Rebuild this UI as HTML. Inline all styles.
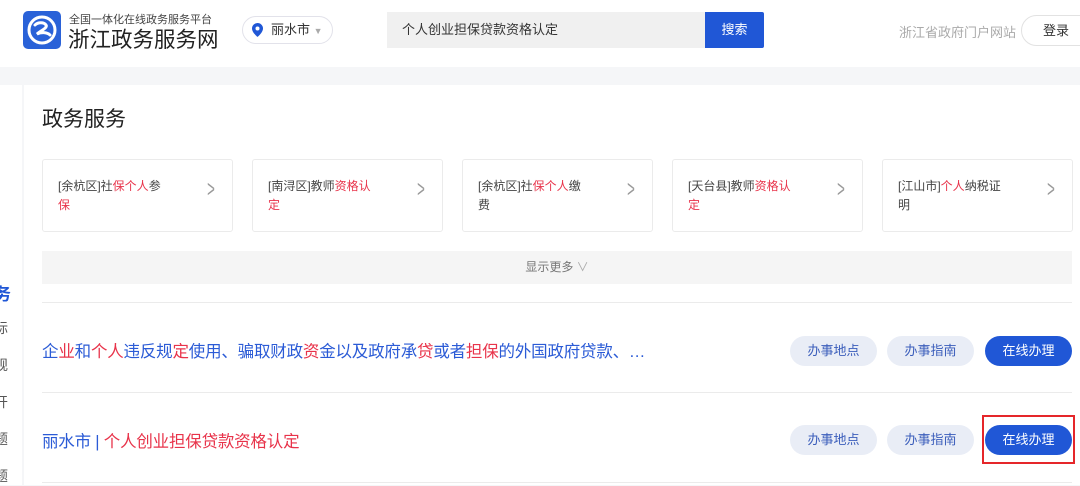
<!DOCTYPE html>
<html><head><meta charset="utf-8"><style>
*{margin:0;padding:0;box-sizing:border-box}
body{width:1080px;height:485px;overflow:hidden;background:#f5f6f8;font-family:"Liberation Sans","Noto Sans CJK SC",sans-serif;position:relative;color:#333}
.a{position:absolute}
.hdr{left:0;top:0;width:1080px;height:67px;background:#fff}
.card{background:#fff;border:1px solid #ebebeb;border-radius:3px;width:191px;height:73px;top:159px;font-size:12px;color:#444;line-height:19px;padding:17px 0 0 15px}
.card i{font-style:normal;color:#e8334a}
.card b{position:absolute;right:14px;top:20px;font-weight:normal;color:#999;font-size:24px;transform:scaleX(.55)}
.r{color:#e8334a}.bl{color:#2b5bd6}
.btn{height:30px;border-radius:15px;font-size:13px;text-align:center;line-height:30px;width:87px}
.g{background:#e9edf6;color:#3a5dbb}
.p{background:#2057d6;color:#fff}
.side{left:-6px;font-size:14px;color:#555}
</style></head><body>
<div class="a hdr"></div>
<svg class="a" style="left:23px;top:11px" width="38" height="38" viewBox="0 0 38 38"><rect width="38" height="38" rx="5" fill="#2a62d8"/><circle cx="19" cy="19" r="13" fill="none" stroke="#fff" stroke-width="3"/><path d="M12 14c3-3 9-3 11 0s-6 6-9 9c4-2 10-2 13 1" fill="none" stroke="#fff" stroke-width="3" stroke-linecap="round"/></svg>
<div class="a" style="left:69px;top:11px;font-size:11px;color:#444">全国一体化在线政务服务平台</div>
<div class="a" style="left:68px;top:23px;font-size:21.5px;color:#222">浙江政务服务网</div>
<div class="a" style="left:242px;top:16px;width:91px;height:28px;border:1px solid #e2e2ea;border-radius:14px;font-size:13px;line-height:26px;padding-left:28px;color:#333">丽水市 <span style="color:#aaa;font-size:9px">▼</span></div>
<svg class="a" style="left:252px;top:23px" width="11" height="14" viewBox="0 0 11 14"><path d="M5.5 0A5.5 5.5 0 0 0 0 5.5C0 9.5 5.5 14 5.5 14S11 9.5 11 5.5A5.5 5.5 0 0 0 5.5 0z" fill="#2057d6"/><circle cx="5.5" cy="5.5" r="2" fill="#fff"/></svg>
<div class="a" style="left:387px;top:12px;width:319px;height:36px;background:#f0f0f0;font-size:13px;line-height:36px;padding-left:15px;color:#333">个人创业担保贷款资格认定</div>
<div class="a" style="left:705px;top:12px;width:59px;height:36px;background:#2057d6;border-radius:0 2px 2px 0;color:#fff;font-size:13px;text-align:center;line-height:36px">搜索</div>
<div class="a" style="left:768px;top:22px;width:248px;text-align:right;font-size:13px;color:#aaa">浙江省政府门户网站</div>
<div class="a" style="left:1021px;top:15px;width:80px;height:31px;border:1px solid #e2e2e2;border-radius:16px;font-size:13px;line-height:29px;padding-left:21px;color:#333">登录</div>
<div class="a" style="left:0;top:85px;width:22px;height:400px;background:#fff"></div>
<div class="a side" style="top:280px;color:#2057d6;font-weight:bold;font-size:17px">务</div>
<div class="a side" style="top:318px">标</div>
<div class="a side" style="top:355px">规</div>
<div class="a side" style="top:392px">开</div>
<div class="a side" style="top:429px">题</div>
<div class="a side" style="top:466px">题</div>
<div class="a" style="left:24px;top:85px;width:1056px;height:400px;background:#fff"></div>
<div class="a" style="left:42px;top:103px;font-size:21px;color:#222">政务服务</div>
<div class="a card" style="left:42px">[余杭区]社<i>保个人</i>参<br><i>保</i><b>&gt;</b></div>
<div class="a card" style="left:252px">[南浔区]教师<i>资格认</i><br><i>定</i><b>&gt;</b></div>
<div class="a card" style="left:462px">[余杭区]社<i>保个人</i>缴<br>费<b>&gt;</b></div>
<div class="a card" style="left:672px">[天台县]教师<i>资格认</i><br><i>定</i><b>&gt;</b></div>
<div class="a card" style="left:882px">[江山市]<i>个人</i>纳税证<br>明<b>&gt;</b></div>
<div class="a" style="left:42px;top:251px;width:1030px;height:33px;background:#f5f5f5;font-size:12px;color:#777;text-align:center;line-height:33px">显示更多 <span style="color:#aaa">∨</span></div>
<div class="a" style="left:42px;top:302px;width:1030px;height:1px;background:#ebebeb"></div>
<div class="a" style="left:42px;top:338px;font-size:16.5px;letter-spacing:-0.2px"><span class="bl">企</span><span class="r">业</span><span class="bl">和</span><span class="r">个人</span><span class="bl">违反规</span><span class="r">定</span><span class="bl">使用、骗取财政</span><span class="r">资</span><span class="bl">金以及政府承</span><span class="r">贷</span><span class="bl">或者</span><span class="r">担保</span><span class="bl">的外国政府贷款、…</span></div>
<div class="a btn g" style="left:790px;top:336px">办事地点</div>
<div class="a btn g" style="left:887px;top:336px">办事指南</div>
<div class="a btn p" style="left:985px;top:336px">在线办理</div>
<div class="a" style="left:42px;top:392px;width:1030px;height:1px;background:#ebebeb"></div>
<div class="a" style="left:42px;top:428px;font-size:16.5px;letter-spacing:-0.2px"><span class="bl">丽水市 | </span><span class="r">个人创业担保贷款资格认定</span></div>
<div class="a btn g" style="left:790px;top:425px">办事地点</div>
<div class="a btn g" style="left:887px;top:425px">办事指南</div>
<div class="a btn p" style="left:985px;top:425px">在线办理</div>
<div class="a" style="left:982px;top:415px;width:93px;height:49px;border:2px solid #e5262a"></div>
<div class="a" style="left:42px;top:482px;width:1030px;height:1px;background:#ebebeb"></div>
</body></html>
